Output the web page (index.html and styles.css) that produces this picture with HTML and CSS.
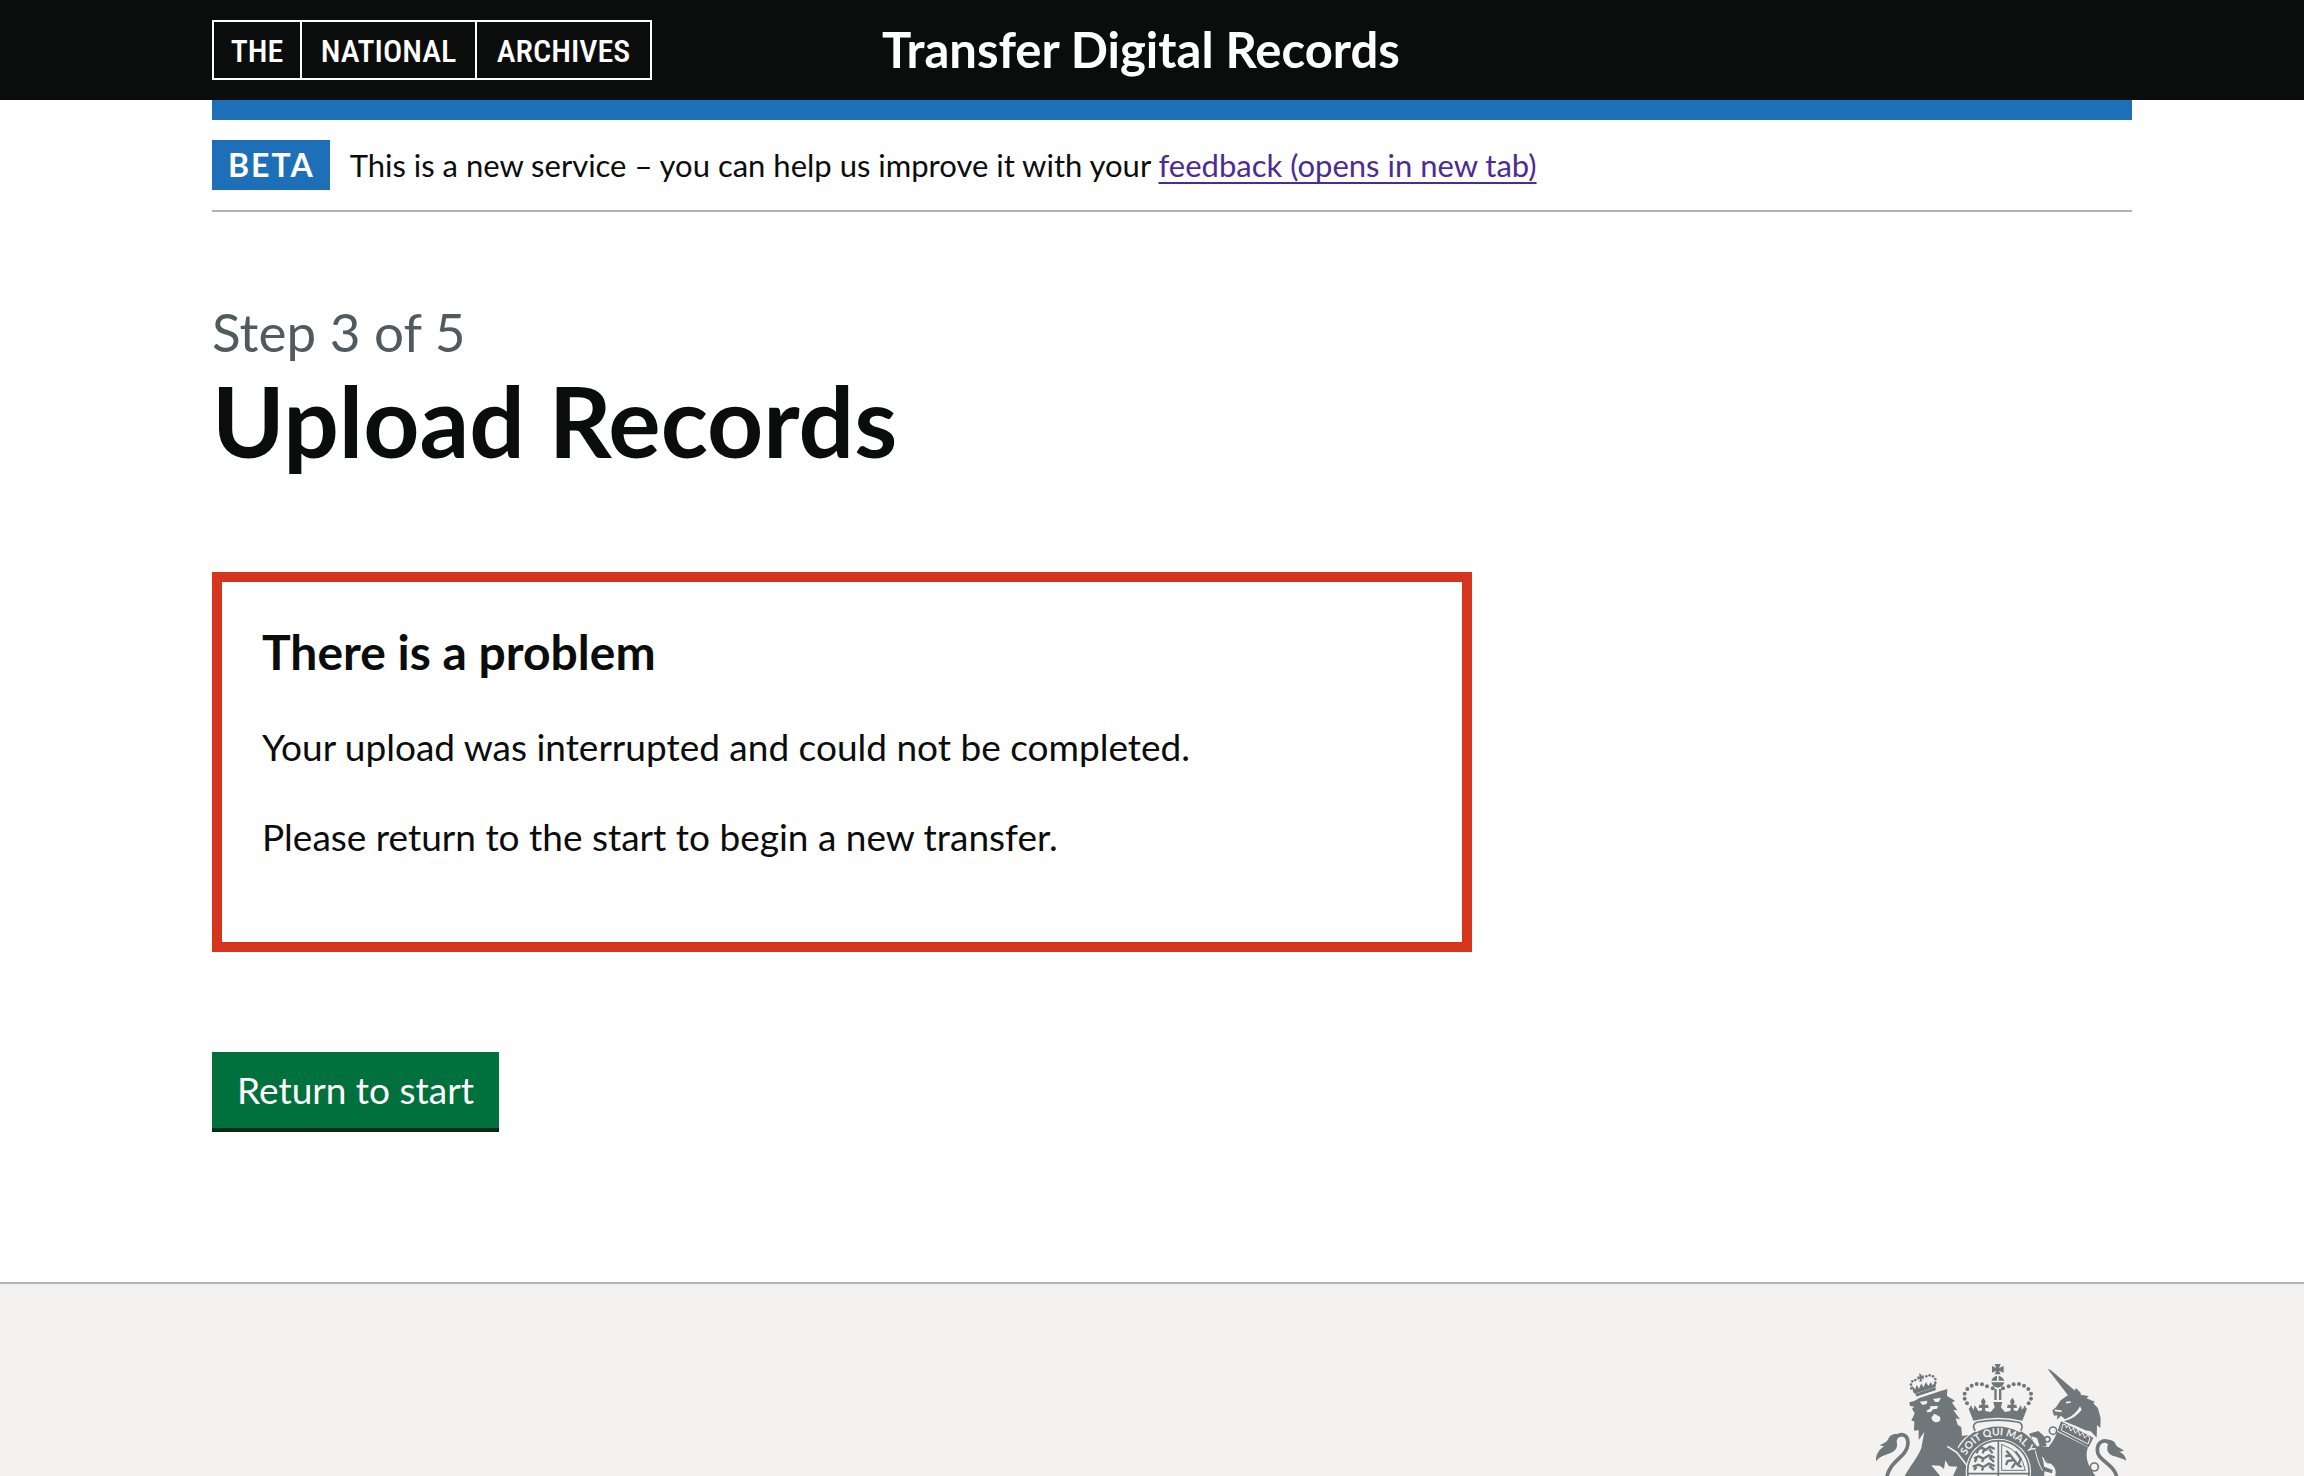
FILE: index.html
```html
<!DOCTYPE html>
<html lang="en">
<head>
<meta charset="utf-8">
<meta name="viewport" content="width=device-width, initial-scale=1">
<title>Upload Records - Transfer Digital Records</title>
<link rel="stylesheet" href="styles.css">
</head>
<body>
<header class="header">
  <div class="container header-row">
    <a class="logo" href="#" aria-label="The National Archives">
      <span>THE</span><span>NATIONAL</span><span>ARCHIVES</span>
    </a>
    <a class="service-name" href="#">Transfer Digital Records</a>
  </div>
</header>
<div class="container">
  <div class="header-bar"></div>
  <div class="phase-banner">
    <strong class="tag">BETA</strong>
    <span>This is a new service – you can help us improve it with your <a class="link" href="#">feedback (opens in new tab)</a></span>
  </div>
</div>
<main class="container main">
  <p class="caption">Step 3 of 5</p>
  <h1 class="heading-xl">Upload Records</h1>
  <section class="error-summary" role="alert" aria-labelledby="error-title">
    <h2 class="error-title" id="error-title">There is a problem</h2>
    <p>Your upload was interrupted and could not be completed.</p>
    <p>Please return to the start to begin a new transfer.</p>
  </section>
  <button class="button" type="button">Return to start</button>
</main>
<footer class="footer">
  <div class="container footer-row">
    <svg class="crest" viewBox="48 42 750 336" aria-hidden="true">
      <g class="ink">
        <!-- lion -->
        <path d="M120 254C100 248 88 256 84 269C78 278 67 281 58 286L72 289C56 300 46 316 48 334C60 318 78 314 94 308C112 301 113 285 110 275C110 267 114 261 122 260Z"/>
        <path class="line" stroke-width="11" d="M80 384C88 330 144 322 144 278C143 252 124 251 112 258"/>
        <path d="M148 157L163 153L178 144L235 125L262 117L261 138L285 152L276 158L292 181L280 180L300 208L287 205L293 224L304 232L306 258L326 255C310 266 300 278 293 292L326 345L326 380L133 380C148 350 172 325 184 294L193 246L176 270L176 240L162 242L163 214L154 212L164 190L156 176L163 170L150 168Z"/>
        <path d="M169 140L228 121L226 112L166 131Z"/>
        <path d="M160 127L154 106L166 118L170 104L177 116L184 100L190 112L198 96L205 108L213 96L217 106L228 96L227 111L164 131Z"/>
        <path d="M177 70L185 74L184 78L192 76L191 88L184 85L187 94L178 95L180 86L172 89L172 79L179 80Z"/>
        <circle cx="154" cy="115" r="4"/><circle cx="153" cy="104" r="4"/><circle cx="157" cy="94" r="4"/><circle cx="166" cy="90" r="4"/>
        <circle cx="199" cy="79" r="4"/><circle cx="209" cy="76" r="4"/><circle cx="219" cy="79" r="4"/><circle cx="226" cy="87" r="4"/><circle cx="226" cy="98" r="4"/>
        <!-- central crown -->
        <path d="M404 42L422 42L417 54L431 48L431 68L417 62L422 73L404 73L409 62L396 68L396 48L409 54Z"/>
        <path d="M411 77L411 92L394 92Q398 80 411 77ZM416 77Q429 80 433 92L416 92ZM394 97H433Q430 111 413 113Q397 111 394 97Z"/>
        <path d="M403 117H410V150H403ZM417 117H424V150H417Z"/>
        <g id="beads">
          <circle cx="398" cy="115" r="6"/><circle cx="381" cy="109" r="6"/><circle cx="366" cy="103" r="6"/><circle cx="350" cy="102" r="6"/><circle cx="335" cy="107" r="6"/><circle cx="322" cy="117" r="6"/><circle cx="314" cy="131" r="6"/><circle cx="314" cy="146" r="6"/><circle cx="321" cy="160" r="6"/>
        </g>
        <use href="#beads" transform="matrix(-1 0 0 1 827 0)"/>
        <path d="M326 176L333 170L341 180L344 165L356 184L366 181L366 174L356 174L358 164L366 164L363 154L370 143L377 154L374 164L384 164L386 174L375 174L376 183L392 186L404 172L400 156L427 156L423 172L435 186L451 183L452 174L441 174L443 164L453 164L450 154L457 143L464 154L461 164L469 164L471 174L461 174L461 181L471 184L483 165L486 180L494 170L501 176L487 212Q413 195 340 212Z"/>
        <path d="M332 168Q335 182 348 190" class="line" stroke-width="5"/>
        <path d="M495 168Q492 182 479 190" class="line" stroke-width="5"/>
        <!-- garter and shield -->
        <circle cx="415" cy="364" r="138"/>
      </g>
      <g class="paper">
        <path d="M179 155L202 152L200 162L188 165ZM219 147L243 143L236 156L226 156Z"/>
        <path d="M199 183L212 174L209 169L234 168L231 176L220 178L212 186L202 187Z"/>
        <path d="M215 202L223 191L240 200L241 211Q234 219 224 216L216 210Z"/>
        <path d="M214 346L240 347L252 357L256 331L267 349L292 350L278 380H242Z"/>
        <path class="line" stroke-width="5" d="M262 289L290 307L324 350"/>
        <path class="line" stroke-width="3" d="M160 145L240 118"/>
        <circle cx="415" cy="364" r="98"/>
        <path d="M348 247C335 235 336 217 352 213Q413 201 475 213C491 217 492 235 480 247Q413 212 348 247Z"/>
      </g>
      <g class="ink">
        <path class="line" stroke-width="5" d="M346 242C336 230 341 219 354 216Q413 205 473 216C487 219 490 230 482 242"/>
        <circle class="line" cx="415" cy="364" r="92" stroke-width="5"/>
        <path class="line" stroke-width="5" d="M415 270V380M324 371H510"/>
        <path class="line" stroke-width="7" d="M352 299L366 293L377 300L390 290L404 297M354 300L350 310M372 300L368 310M388 298L398 310M342 325L356 319L370 326L387 316L404 323M350 325L344 336M370 326L366 336M388 322L402 336M338 350L356 344L370 351L387 341L404 348M350 350L342 360M370 350L366 362M388 348L402 360"/>
        <path class="line" stroke-width="3" d="M425 283V361H496Q486 305 425 283Z"/>
        <path class="line" stroke-width="7" d="M439 302L450 314L462 330L474 345L485 351M450 314L436 320M461 330L443 333L438 345M467 338L455 354M476 342L482 326L472 312L466 304"/>
        <!-- unicorn -->
        <path d="M563 57L572 60L647 124L628 141Z"/>
        <path d="M577 181L588 172L602 151L621 137L641 129L648 114L662 128L662 134L686 138L680 145L704 155L700 160L714 175L722 205L721 234L711 225L710 263L692 244L676 241L650 229L612 214Q650 202 665 179L660 169Q648 195 615 208L603 197L591 209L592 196L582 197Z"/>
        <path d="M603 214L700 263L686 292L593 242Z"/>
        <path d="M592 245L684 292C672 322 687 352 708 380H585C592 355 580 345 560 332L532 307L547 348L578 360L576 370L548 362L524 300L535 287L566 291L582 268Z"/>
        <path d="M507 251L535 243L552 258L560 287L540 290L531 264L514 259L520 276Z"/>
        <path d="M508 312L528 300L545 340L552 366L530 358L520 330L512 340Z"/>
        <g class="line" stroke-width="5"><circle cx="579" cy="242" r="11"/><circle cx="562" cy="268" r="8"/><circle cx="568" cy="325" r="13"/><circle cx="703" cy="351" r="12"/></g>
        <path class="line" stroke-width="11" d="M771 384C763 340 711 332 712 300C713 272 734 268 748 277"/>
        <path d="M736 271C752 266 765 274 768 286C775 294 784 295 792 302L778 305C790 311 798 319 798 332C788 324 772 322 758 317C741 309 739 297 744 284Z"/>
      </g>
      <g class="paper">
        <path class="line" stroke-width="5" d="M584 181L605 184M618 158L632 156"/>
        <path d="M609 222L618 226L619 234L626 226L632 243L640 234L646 250L654 240L660 257L668 248L674 264L682 255L690 264L684 282L604 241Z" class="line" stroke-width="3"/>
        <path class="line" stroke-width="3" d="M526 302Q534 340 548 362"/>
        <path id="motto" class="guide" d="M307 364A108 108 0 0 1 523 364"/>
        <text class="motto"><textPath href="#motto" startOffset="49%">SOIT QUI MAL Y</textPath></text>
      </g>
    </svg>
  </div>
</footer>
</body>
</html>
```
FILE: styles.css
```css
*{box-sizing:border-box}
body{
  margin:0;
  min-height:100vh;
  display:flex;
  flex-direction:column;
  background:#fff;
  color:#0b0c0c;
  font-family:Lato,"Liberation Sans",sans-serif;
  font-size:37px;
  line-height:50px;
}
h1,h2,p{margin:0}
.container{width:100%;padding:0 172px 0 212px}
.header{background:#0b0c0c;padding:20px 0}
.header-row{display:grid;grid-template-columns:670px 1fr;align-items:start}
.logo{
  display:grid;
  grid-template-columns:86px 175px 175px;
  width:440px;
  height:60px;
  border:2px solid #fff;
  color:#fff;
  font:500 32px/58px "Roboto Condensed",Roboto,sans-serif;
  text-align:center;
  text-decoration:none;
}
.logo span + span{border-left:2px solid #fff}
.service-name{color:#fff;font-size:49px;font-weight:700;line-height:58px;text-decoration:none}
.header-row{height:60px}
.header-bar{height:20px;background:#1d70b8}
.phase-banner{
  display:flex;
  align-items:center;
  gap:20px;
  padding:20px 0;
  border-bottom:2px solid #b1b4b6;
  font-size:31px;
}
.tag{padding:0 15px 0 16px;background:#1d70b8;color:#fff;font-size:32px;letter-spacing:2px}
.link{color:#4c2c92;text-decoration-thickness:2px;text-underline-offset:5px}
.main{padding-top:90px;padding-bottom:154px}
.caption{color:#505a5f;font-size:53px;line-height:60px}
.heading-xl{margin:8px 0 102px;font-size:98px;line-height:100px}
.error-summary{
  max-width:1260px;
  padding:42px 40px 40px;
  border:10px solid #d4351c;
}
.error-title{margin-bottom:42px;font-size:48px;line-height:56px}
.error-summary p{margin-bottom:40px}
.button{
  display:block;
  margin-top:100px;
  padding:13px 25px;
  border:0;
  background:#00703c;
  box-shadow:0 4px 0 #002d18;
  color:#fff;
  font:inherit;
}
.footer{flex:1;padding-top:80px;border-top:2px solid #b1b4b6;background:#f3f2f1}
.footer-row{display:flex;justify-content:flex-end}
.crest{display:block;width:250px;height:112px;margin-right:6px}
.ink{fill:#6f777b;stroke:#6f777b;stroke-width:0}
.paper{fill:#f3f2f1;stroke:#f3f2f1;stroke-width:0}
.line{fill:none}
.guide{fill:none;stroke:none}
.motto{font-size:31px;font-weight:700;text-anchor:middle}
```
